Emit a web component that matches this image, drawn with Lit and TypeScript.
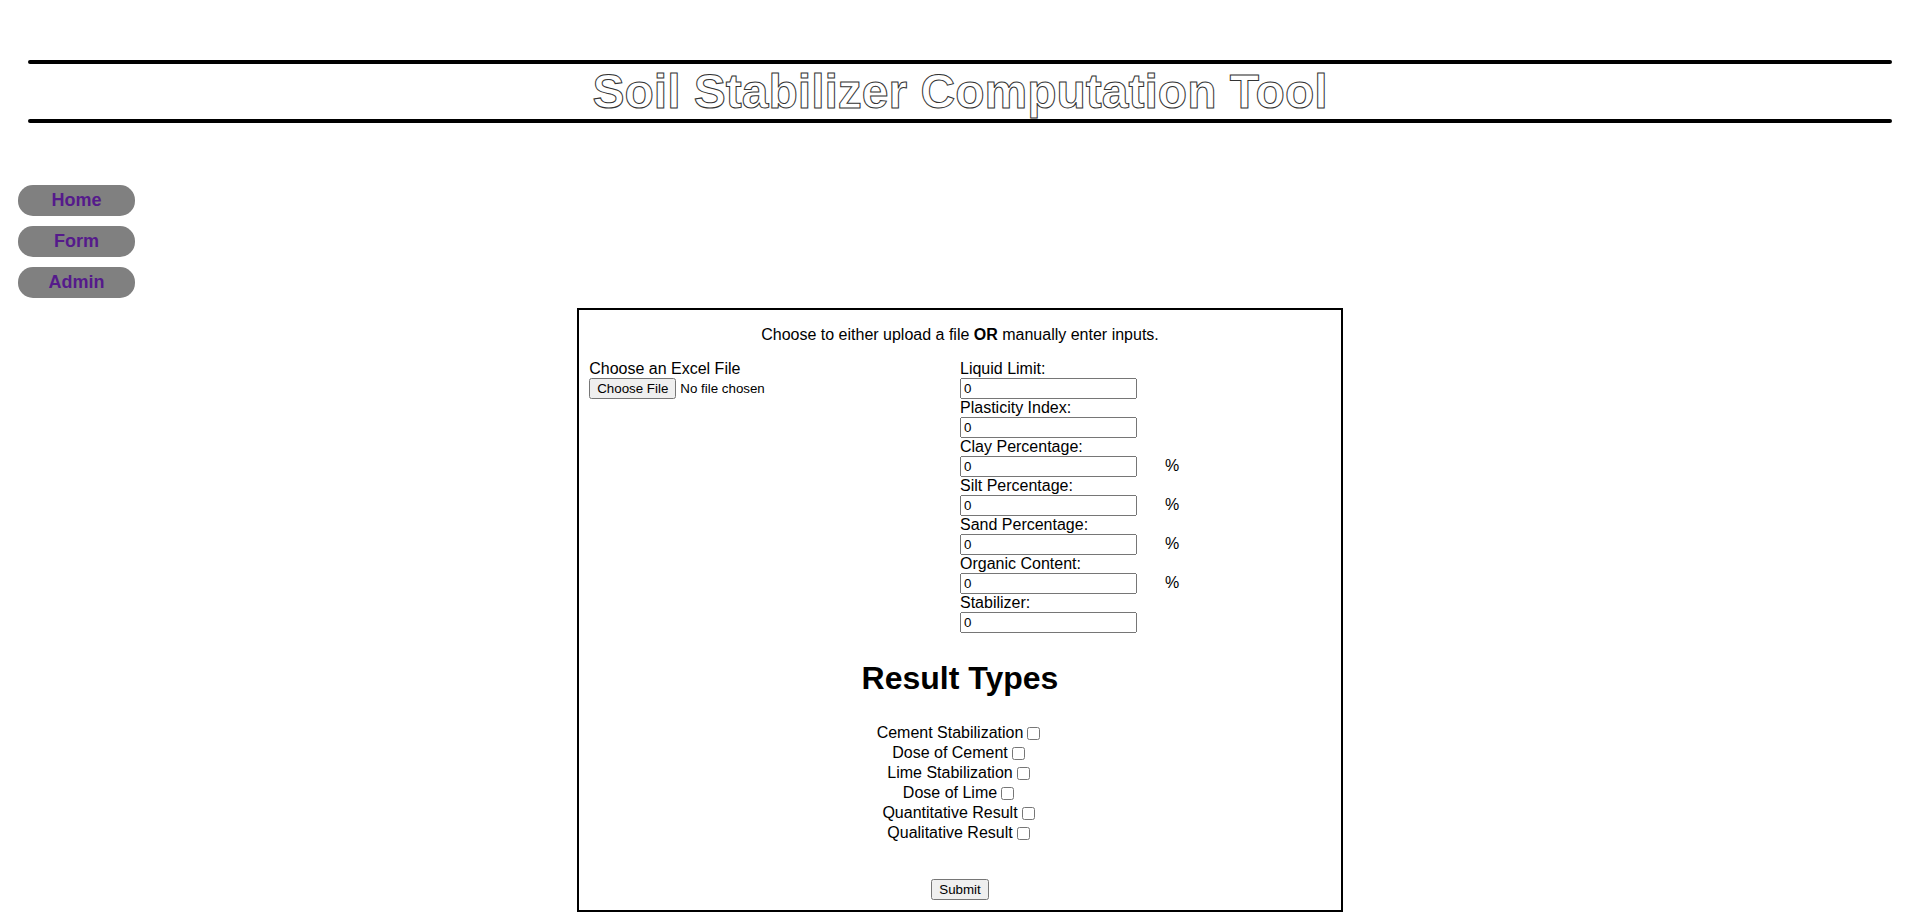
import { LitElement, html, css, nothing } from "lit";
import { customElement } from "lit/decorators.js";

interface Field {
  id: string;
  label: string;
  percent?: boolean;
}

const NAV = ["Home", "Form", "Admin"];

const FIELDS: Field[] = [
  { id: "liquid-limit", label: "Liquid Limit:" },
  { id: "plasticity-index", label: "Plasticity Index:" },
  { id: "clay", label: "Clay Percentage:", percent: true },
  { id: "silt", label: "Silt Percentage:", percent: true },
  { id: "sand", label: "Sand Percentage:", percent: true },
  { id: "organic", label: "Organic Content:", percent: true },
  { id: "stabilizer", label: "Stabilizer:" },
];

const RESULTS = [
  "Cement Stabilization",
  "Dose of Cement",
  "Lime Stabilization",
  "Dose of Lime",
  "Quantitative Result",
  "Qualitative Result",
];

@customElement("app-root")
export class AppRoot extends LitElement {
  static styles = css`
    :host {
      display: block;
      padding: 60px 8px 8px;
      font: 16px/18px "Liberation Sans", Arial, sans-serif;
      color: #000;
    }
    .title {
      margin: 0 20px 62px;
      font-size: 48px;
      line-height: 55px;
      text-align: center;
      color: #fff;
      -webkit-text-stroke: 1px #333;
    }
    .title::before,
    .title::after {
      content: "";
      display: block;
      height: 4px;
      border-radius: 2px;
      background: #000;
    }
    .nav {
      display: flex;
      flex-direction: column;
      align-items: flex-start;
      gap: 10px;
      margin: 0 10px 10px;
    }
    .nav-link {
      box-sizing: border-box;
      width: 117px;
      padding: 5px;
      border-radius: 15px;
      background: #808080;
      color: #551a8b;
      font-size: 18px;
      font-weight: bold;
      line-height: 21px;
      text-align: center;
      text-decoration: none;
    }
    .form {
      width: 40%;
      margin: 0 auto;
      border: 2px solid #000;
    }
    .body {
      padding: 16px 10px 10px;
    }
    .intro {
      margin: 0 0 16px;
      text-align: center;
    }
    .columns {
      display: grid;
      grid-template-columns: 1fr 1fr;
    }
    .label {
      display: block;
    }
    .file,
    .input,
    .submit {
      font-family: "Liberation Sans", Arial, sans-serif;
      height: 21px;
    }
    .file {
      display: block;
    }
    .row {
      display: flex;
      gap: 28px;
      line-height: 20px;
    }
    .input {
      box-sizing: border-box;
      width: 177px;
      margin: 0;
    }
    .heading {
      margin: 27px 0 26px;
      font-size: 32px;
      line-height: 37px;
      text-align: center;
    }
    .results {
      display: flex;
      flex-direction: column;
      align-items: center;
      margin-bottom: 36px;
    }
    .result {
      display: flex;
      align-items: center;
      height: 20px;
    }
    .check {
      margin: 0 3px 0 4px;
    }
    .submit {
      display: block;
      margin: 0 auto;
    }
  `;

  render() {
    return html`
      <h1 class="title">Soil Stabilizer Computation Tool</h1>
      <nav class="nav">
        ${NAV.map((n) => html`<a class="nav-link" href="#">${n}</a>`)}
      </nav>
      <form class="form">
        <div class="body">
          <p class="intro">
            Choose to either upload a file <b>OR</b> manually enter inputs.
          </p>
          <div class="columns">
            <div>
              <label class="label" for="file">Choose an Excel File</label>
              <input class="file" id="file" type="file" />
            </div>
            <div>
              ${FIELDS.map(
                (f) => html`
                  <label class="label" for=${f.id}>${f.label}</label>
                  <div class="row">
                    <input class="input" id=${f.id} type="text" value="0" />
                    ${f.percent ? html`<span>%</span>` : nothing}
                  </div>
                `
              )}
            </div>
          </div>
          <h1 class="heading">Result Types</h1>
          <div class="results">
            ${RESULTS.map(
              (r) => html`<label class="result"
                >${r}<input class="check" type="checkbox"
              /></label>`
            )}
          </div>
          <button class="submit" type="button">Submit</button>
        </div>
      </form>
    `;
  }
}
